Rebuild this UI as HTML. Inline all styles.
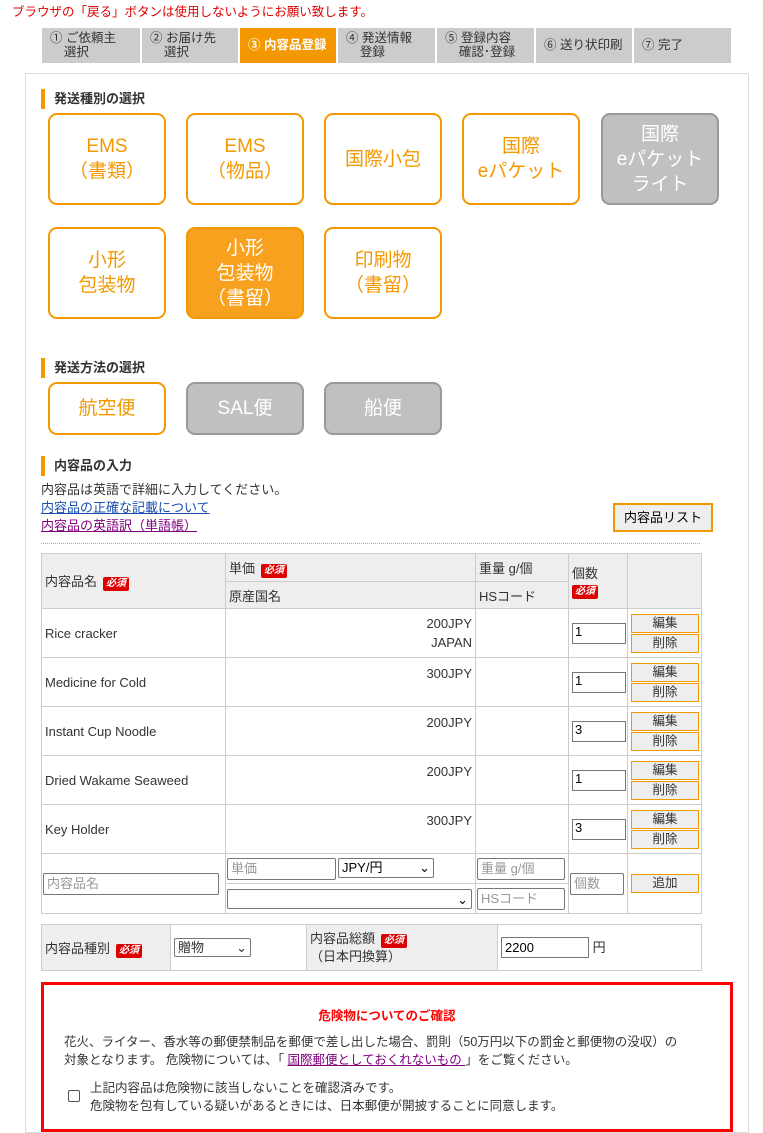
<!DOCTYPE html>
<html><head><meta charset="utf-8"><style>
*{box-sizing:border-box;margin:0;padding:0}
body{width:763px;height:1114px;overflow:hidden;background:#fff;font-family:"Liberation Sans","Noto Sans CJK JP",sans-serif;font-size:13px;color:#333;position:relative}
.a{position:absolute}
.step{position:absolute;top:28px;height:35px;background:#ccc;color:#333;font-size:12.5px;line-height:14px;padding:3px 0 0 8px}
.step.on{background:#f39800;color:#fff;padding-top:10px;font-weight:bold}
.box{position:absolute;border:1px solid #ddd}
.hd{position:absolute;left:41px;border-left:4px solid #f39800;padding-left:9px;height:20px;line-height:20px;font-weight:bold;font-size:13px;color:#333}
.btn{position:absolute;width:118px;border:2px solid #f39800;border-radius:9px;color:#f39800;font-size:19px;line-height:25px;display:flex;align-items:center;justify-content:center;text-align:center;background:#fff}
.btn.sel{background:#f7a11e;color:#fff}
.btn.dis{background:#c0c0c0;border-color:#999;color:#fff;border-width:2px}
table{border-collapse:collapse;position:absolute;table-layout:fixed}
td{border:1px solid #ccc;font-size:13px;vertical-align:middle;padding:0 3px}
.g{background:#eee}
.req{display:inline-block;background:#d00;color:#fff;font-size:10px;font-weight:bold;font-style:italic;padding:1px 3px;border-radius:2px;line-height:12px;margin-left:6px}
.eb{display:block;width:68px;height:19px;border:1px solid #f39800;background:#eee;text-align:center;font-size:12.5px;line-height:17px;margin:1px 0}
.in{border:1px solid #777;height:22px;background:#fff;font-size:13px;padding-left:3px;line-height:20px;color:#999;position:absolute;border-radius:2px}
.sel2{color:#000}
</style></head><body>
<div class="a" style="left:12px;top:1px;color:#d00;font-size:12.5px">ブラウザの「戻る」ボタンは使用しないようにお願い致します。</div>
<div class="step" style="left:42px;width:98px">① ご依頼主<br>&nbsp;&nbsp;&nbsp;&nbsp;選択</div>
<div class="step" style="left:142px;width:96px">② お届け先<br>&nbsp;&nbsp;&nbsp;&nbsp;選択</div>
<div class="step on" style="left:240px;width:96px">③ 内容品登録</div>
<div class="step" style="left:338px;width:97px">④ 発送情報<br>&nbsp;&nbsp;&nbsp;&nbsp;登録</div>
<div class="step" style="left:437px;width:97px">⑤ 登録内容<br>&nbsp;&nbsp;&nbsp;&nbsp;確認･登録</div>
<div class="step" style="left:536px;width:96px;padding-top:10px">⑥ 送り状印刷</div>
<div class="step" style="left:634px;width:97px;padding-top:10px">⑦ 完了</div>

<div class="box" style="left:25px;top:73px;width:724px;height:1060px"></div>

<div class="hd" style="top:89px">発送種別の選択</div>
<div class="btn" style="left:48px;top:113px;height:92px">EMS<br>（書類）</div>
<div class="btn" style="left:186px;top:113px;height:92px">EMS<br>（物品）</div>
<div class="btn" style="left:324px;top:113px;height:92px">国際小包</div>
<div class="btn" style="left:462px;top:113px;height:92px">国際<br>eパケット</div>
<div class="btn dis" style="left:601px;top:113px;height:92px">国際<br>eパケット<br>ライト</div>
<div class="btn" style="left:48px;top:227px;height:92px">小形<br>包装物</div>
<div class="btn sel" style="left:186px;top:227px;height:92px">小形<br>包装物<br>（書留）</div>
<div class="btn" style="left:324px;top:227px;height:92px">印刷物<br>（書留）</div>

<div class="hd" style="top:358px">発送方法の選択</div>
<div class="btn" style="left:48px;top:382px;height:53px">航空便</div>
<div class="btn dis" style="left:186px;top:382px;height:53px">SAL便</div>
<div class="btn dis" style="left:324px;top:382px;height:53px">船便</div>

<div class="hd" style="top:456px">内容品の入力</div>
<div class="a" style="left:41px;top:479px">内容品は英語で詳細に入力してください。</div>
<div class="a" style="left:41px;top:497px;color:#1a4fb0;text-decoration:underline">内容品の正確な記載について</div>
<div class="a" style="left:41px;top:515px;color:#800080;text-decoration:underline">内容品の英語訳（単語帳）</div>
<div class="a" style="left:613px;top:503px;width:100px;height:29px;border:2px solid #f39800;background:#eee;text-align:center;line-height:25px;color:#000">内容品リスト</div>
<div class="a" style="left:41px;top:543px;width:659px;border-top:1px dotted #aaa"></div>

<table style="left:41px;top:553px;width:660px">
<colgroup><col style="width:184px"><col style="width:250px"><col style="width:93px"><col style="width:59px"><col style="width:74px"></colgroup>
<tr style="height:28px"><td class="g" rowspan="2">内容品名<span class="req">必須</span></td><td class="g">単価<span class="req">必須</span></td><td class="g">重量 g/個</td><td class="g" rowspan="2">個数<br><span class="req" style="margin:0">必須</span></td><td class="g" rowspan="2"></td></tr>
<tr style="height:27px"><td class="g">原産国名</td><td class="g">HSコード</td></tr>
<tr style="height:49px"><td>Rice cracker</td><td style="text-align:right;line-height:19px">200JPY<br>JAPAN</td><td></td><td><div style="border:1px solid #777;height:21px;width:54px;padding-left:2px;color:#000">1</div></td><td><span class="eb">編集</span><span class="eb">削除</span></td></tr>
<tr style="height:49px"><td>Medicine for Cold</td><td style="text-align:right;vertical-align:top;padding-top:8px">300JPY</td><td></td><td><div style="border:1px solid #777;height:21px;width:54px;padding-left:2px;color:#000">1</div></td><td><span class="eb">編集</span><span class="eb">削除</span></td></tr>
<tr style="height:49px"><td>Instant Cup Noodle</td><td style="text-align:right;vertical-align:top;padding-top:8px">200JPY</td><td></td><td><div style="border:1px solid #777;height:21px;width:54px;padding-left:2px;color:#000">3</div></td><td><span class="eb">編集</span><span class="eb">削除</span></td></tr>
<tr style="height:49px"><td>Dried Wakame Seaweed</td><td style="text-align:right;vertical-align:top;padding-top:8px">200JPY</td><td></td><td><div style="border:1px solid #777;height:21px;width:54px;padding-left:2px;color:#000">1</div></td><td><span class="eb">編集</span><span class="eb">削除</span></td></tr>
<tr style="height:49px"><td>Key Holder</td><td style="text-align:right;vertical-align:top;padding-top:8px">300JPY</td><td></td><td><div style="border:1px solid #777;height:21px;width:54px;padding-left:2px;color:#000">3</div></td><td><span class="eb">編集</span><span class="eb">削除</span></td></tr>
<tr style="height:30px"><td rowspan="2"></td><td></td><td></td><td rowspan="2"></td><td rowspan="2"><span class="eb">追加</span></td></tr>
<tr style="height:30px"><td></td><td></td></tr>
</table>
<div class="in" style="left:43px;top:873px;width:176px">内容品名</div>
<div class="in" style="left:227px;top:858px;width:109px">単価</div>
<div class="in sel2" style="left:338px;top:858px;width:96px;height:20px;line-height:18px">JPY/円<span style="position:absolute;right:3px">⌄</span></div>
<div class="in" style="left:227px;top:889px;width:245px;height:20px"><span style="position:absolute;right:3px;color:#000">⌄</span></div>
<div class="in" style="left:477px;top:858px;width:88px">重量 g/個</div>
<div class="in" style="left:477px;top:888px;width:88px">HSコード</div>
<div class="in" style="left:570px;top:873px;width:54px">個数</div>

<table style="left:41px;top:924px;width:660px">
<colgroup><col style="width:129px"><col style="width:136px"><col style="width:191px"><col style="width:204px"></colgroup>
<tr style="height:46px"><td class="g">内容品種別<span class="req">必須</span></td><td><div style="border:1px solid #777;height:19px;width:77px;padding-left:3px;line-height:17px;border-radius:2px;position:relative">贈物<span style="position:absolute;right:3px">⌄</span></div></td><td class="g" style="line-height:18px">内容品総額<span class="req">必須</span><br>（日本円換算）</td><td><span style="display:inline-block;border:1px solid #777;width:88px;height:21px;padding-left:3px;line-height:19px;color:#000">2200</span> 円</td></tr>
</table>

<div class="a" style="left:41px;top:982px;width:692px;height:150px;border:3px solid #f00"></div>
<div class="a" style="left:41px;top:1005px;width:692px;text-align:center;color:#f00;font-weight:bold;font-size:12.5px">危険物についてのご確認</div>
<div class="a" style="left:64px;top:1033px;width:645px;line-height:18px;font-size:12.5px">花火、ライター、香水等の郵便禁制品を郵便で差し出した場合、罰則（50万円以下の罰金と郵便物の没収）の<br>対象となります。 危険物については、「 <span style="color:#800080;text-decoration:underline">国際郵便としておくれないもの </span>」をご覧ください。</div>
<div class="a" style="left:68px;top:1090px;width:12px;height:12px;border:1px solid #555;border-radius:2px"></div>
<div class="a" style="left:90px;top:1079px;line-height:18px;font-size:12.5px">上記内容品は危険物に該当しないことを確認済みです。<br>危険物を包有している疑いがあるときには、日本郵便が開披することに同意します。</div>
</body></html>
